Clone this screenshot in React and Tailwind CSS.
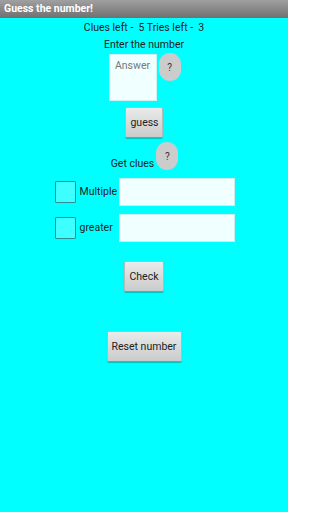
import React from "react";

function HelpBubble({ className = "" }) {
  return (
    <div className={`w-[22px] h-[28px] rounded-full bg-[#cccccc] flex items-center justify-center text-[10px] text-[#333] ${className}`}>
      ?
    </div>
  );
}

function GrayButton({ children, className = "" }) {
  return (
    <button
      type="button"
      className={`h-[31px] rounded-[2px] bg-gradient-to-b from-[#eaeaea] to-[#c9cccc] border border-[#b5baba] border-b-[#8e9595] shadow-[0_1px_1px_rgba(0,0,0,0.25)] text-[10.5px] text-[#222] ${className}`}
    >
      {children}
    </button>
  );
}

function ClueRow({ label }) {
  return (
    <div className="flex items-center w-[180px] h-[28px]">
      <div className="w-[21px] h-[22px] border border-[#2b8f8f] bg-[#3dffff] rounded-[1px] shrink-0" />
      <span className="ml-[4px] w-[39px] text-[10.5px] text-[#222]">{label}</span>
      <div className="ml-auto w-[116px] h-[28px] bg-[#f0ffff] border border-[#c9eeee]" />
    </div>
  );
}

export default function App() {
  return (
    <div className="w-[288px] h-[512px] bg-[#00ffff] flex flex-col items-center" style={{ fontFamily: "Roboto, 'Liberation Sans', sans-serif" }}>
      <div className="w-full h-[18px] bg-gradient-to-b from-[#a0a0a0] to-[#707070] flex items-center px-[4px] text-white font-bold text-[10.5px]">
        Guess the number!
      </div>

      <div className="mt-[3px] text-[10.5px] text-[#222] whitespace-pre leading-[14px]">Clues left -  5 Tries left -  3</div>
      <div className="mt-[3px] text-[10.5px] text-[#222] leading-[14px]">Enter the number</div>

      <div className="mt-[1px] flex items-start gap-[2px] pl-[1px]">
        <div className="w-[48px] h-[47px] mt-[1px] bg-[#f0ffff] border border-[#d0f0f0] flex justify-center pt-[5px] text-[10.5px] text-[#777] leading-[12px]">
          Answer
        </div>
        <HelpBubble />
      </div>

      <GrayButton className="mt-[6px] w-[38px] pl-[1px]">guess</GrayButton>

      <div className="mt-[4px] flex items-end gap-[2px] pl-[1px]">
        <span className="text-[10.5px] text-[#222] leading-[14px] mb-[2px]">Get clues</span>
        <HelpBubble className="mb-[3px]" />
      </div>

      <div className="mt-[5px] flex flex-col gap-[8px] pl-[1px]">
        <ClueRow label="Multiple" />
        <ClueRow label="greater" />
      </div>

      <GrayButton className="mt-[19px] w-[40px]">Check</GrayButton>
      <GrayButton className="mt-[39px] w-[75px]">Reset number</GrayButton>
    </div>
  );
}
